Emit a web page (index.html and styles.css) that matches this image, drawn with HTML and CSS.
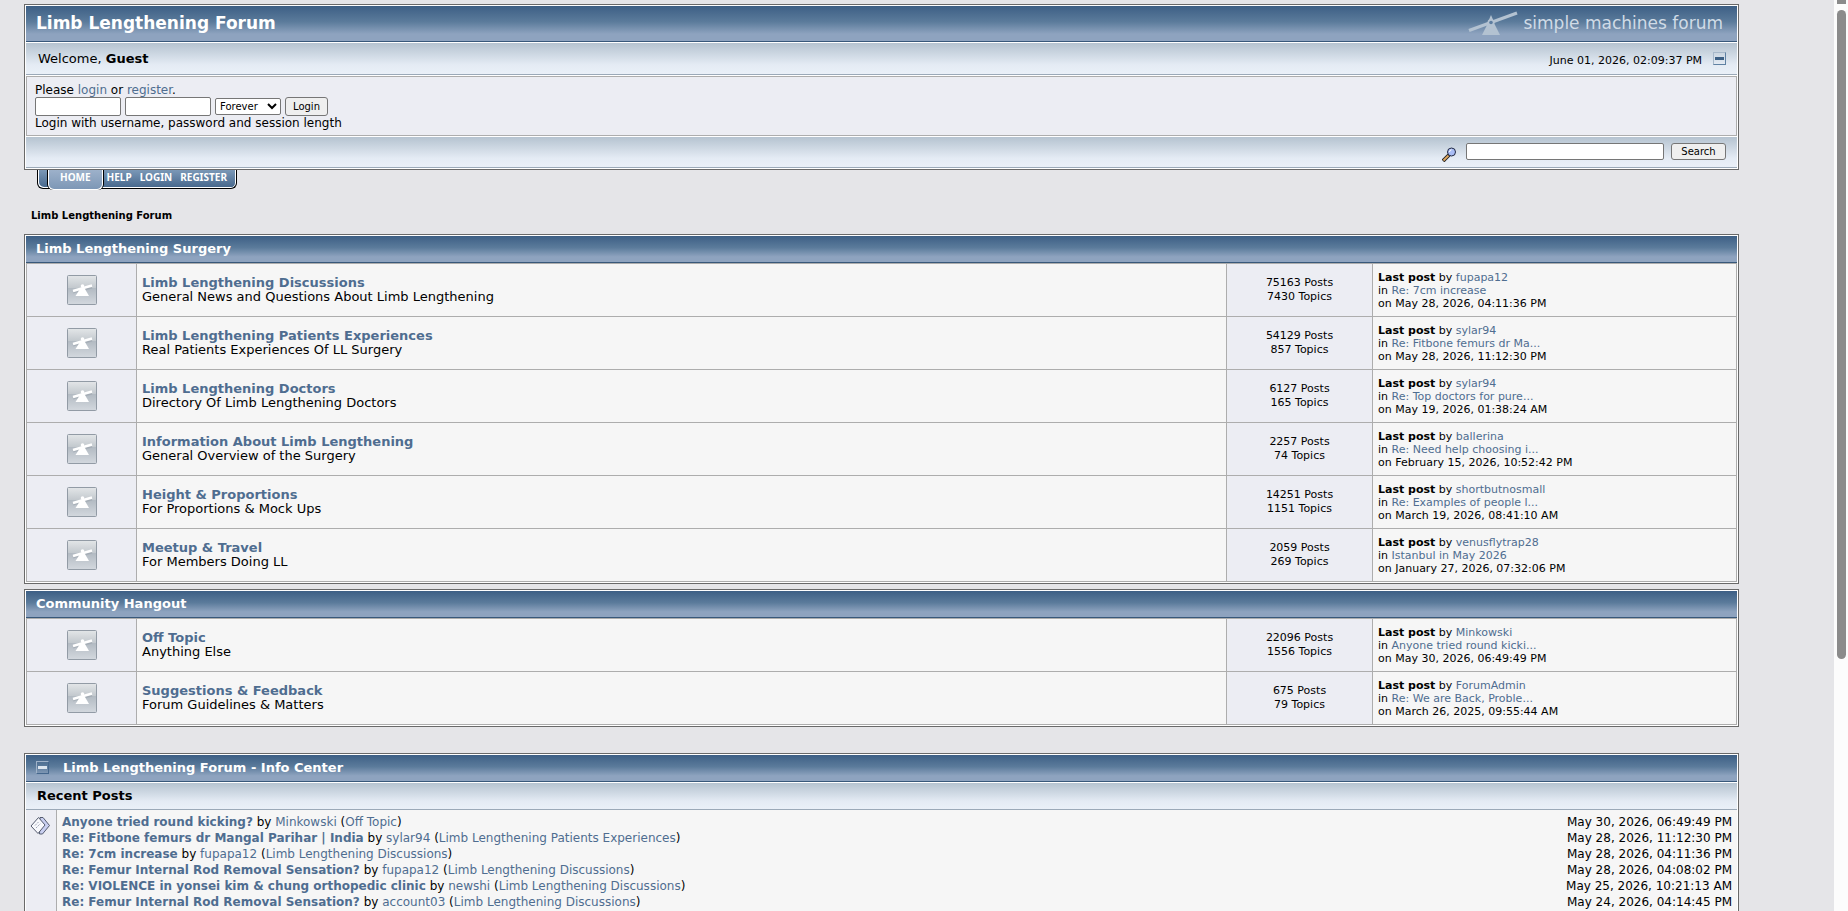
FILE: index.html
```
<!DOCTYPE html>
<html lang="en">
<head>
    <meta charset="UTF-8">
    <meta name="viewport" content="width=device-width, initial-scale=1.0">
    <title>Limb Lengthening Forum - Index</title>
    <link rel="stylesheet" href="styles.css">
</head>
<body>
    <svg width="0" height="0" class="sprite">
        <defs>
            <linearGradient id="boardTop" x1="0" y1="0" x2="0" y2="1">
                <stop offset="0" stop-color="#e3e6e8"/>
                <stop offset="0.42" stop-color="#c3c9ce"/>
                <stop offset="0.43" stop-color="#b2bac2"/>
                <stop offset="1" stop-color="#d3d8de"/>
            </linearGradient>
            <symbol id="board" viewBox="0 0 30 30">
                <rect x="0.5" y="0.5" width="29" height="29" rx="1" fill="url(#boardTop)" stroke="#929ba5"/>
                <path d="M6 17.500 25 12.500" stroke="#8f98a2" stroke-width="2" opacity="0.4"/>
                <path d="M8.500 21 13 14h5l4 7z" fill="#fff"/>
                <circle cx="15.500" cy="11" r="1.800" fill="#fff"/>
                <path d="M6 16 25 10.500" stroke="#fff" stroke-width="2.400"/>
            </symbol>
        </defs>
    </svg>

    <div class="page">
        <header class="frame">
            <div class="catbg top-bar">
                <h1>Limb Lengthening Forum</h1>
                <div class="smf-logo">
                    <svg width="50" height="26" viewBox="0 0 50 26">
                        <path d="M14 25 20.500 12h5L32 25z" fill="#b3c2d1"/>
                        <path d="M20 12l3-7 3 7z" fill="#b3c2d1"/>
                        <path d="M1 20.500 49 3" stroke="#b3c2d1" stroke-width="3.200"/>
                        <circle cx="23" cy="12.500" r="3.500" fill="#b3c2d1"/>
                        <circle cx="23" cy="12.500" r="1.800" fill="#5d7da0"/>
                    </svg>
                    <span>simple machines forum</span>
                </div>
            </div>
            <div class="titlebg user-bar">
                <span class="welcome">Welcome, <b>Guest</b></span>
                <span class="clock">June 01, 2026, 02:09:37 PM</span>
                <button class="collapse" aria-label="Shrink or expand the header"></button>
            </div>
            <form class="login">
                <div>Please <a href="#">login</a> or <a href="#">register</a>.</div>
                <div class="login-fields">
                    <input type="text" aria-label="Username">
                    <input type="password" aria-label="Password">
                    <select aria-label="Session length">
                        <option>Forever</option>
                        <option>1 Hour</option>
                        <option>1 Day</option>
                    </select>
                    <button type="button">Login</button>
                </div>
                <div>Login with username, password and session length</div>
            </form>
            <form class="titlebg search-bar">
                <svg width="15" height="15" viewBox="0 0 15 15">
                    <path d="M1 14 7 8" stroke="#222" stroke-width="3.800"/>
                    <path d="M1.500 13.500 6.500 8.500" stroke="#e0a860" stroke-width="1.800"/>
                    <circle cx="9.500" cy="5" r="4" fill="#a9bdf5" stroke="#222a44"/>
                    <path d="M7.500 5q0-2 2-2.200" stroke="#fff" fill="none"/>
                </svg>
                <input type="text" aria-label="Search">
                <button type="button">Search</button>
            </form>
        </header>

        <nav class="tabs">
            <a class="active" href="#">Home</a>
            <a href="#">Help</a>
            <a href="#">Login</a>
            <a href="#">Register</a>
        </nav>

        <div class="crumb"><a href="#">Limb Lengthening Forum</a></div>

        <section class="frame boards">
            <h2 class="catbg">Limb Lengthening Surgery</h2>
            <table>
                <tr>
                    <td class="icon"><svg><use href="#board"/></svg></td>
                    <td class="name"><a href="#">Limb Lengthening Discussions</a><br>General News and Questions About Limb Lengthening</td>
                    <td class="count">75163 Posts<br>7430 Topics</td>
                    <td class="last"><b>Last post</b> by <a href="#">fupapa12</a><br>in <a href="#">Re: 7cm increase</a><br>on May 28, 2026, 04:11:36 PM</td>
                </tr>
                <tr>
                    <td class="icon"><svg><use href="#board"/></svg></td>
                    <td class="name"><a href="#">Limb Lengthening Patients Experiences</a><br>Real Patients Experiences Of LL Surgery</td>
                    <td class="count">54129 Posts<br>857 Topics</td>
                    <td class="last"><b>Last post</b> by <a href="#">sylar94</a><br>in <a href="#">Re: Fitbone femurs dr Ma...</a><br>on May 28, 2026, 11:12:30 PM</td>
                </tr>
                <tr>
                    <td class="icon"><svg><use href="#board"/></svg></td>
                    <td class="name"><a href="#">Limb Lengthening Doctors</a><br>Directory Of Limb Lengthening Doctors</td>
                    <td class="count">6127 Posts<br>165 Topics</td>
                    <td class="last"><b>Last post</b> by <a href="#">sylar94</a><br>in <a href="#">Re: Top doctors for pure...</a><br>on May 19, 2026, 01:38:24 AM</td>
                </tr>
                <tr>
                    <td class="icon"><svg><use href="#board"/></svg></td>
                    <td class="name"><a href="#">Information About Limb Lengthening</a><br>General Overview of the Surgery</td>
                    <td class="count">2257 Posts<br>74 Topics</td>
                    <td class="last"><b>Last post</b> by <a href="#">ballerina</a><br>in <a href="#">Re: Need help choosing i...</a><br>on February 15, 2026, 10:52:42 PM</td>
                </tr>
                <tr>
                    <td class="icon"><svg><use href="#board"/></svg></td>
                    <td class="name"><a href="#">Height &amp; Proportions</a><br>For Proportions &amp; Mock Ups</td>
                    <td class="count">14251 Posts<br>1151 Topics</td>
                    <td class="last"><b>Last post</b> by <a href="#">shortbutnosmall</a><br>in <a href="#">Re: Examples of people l...</a><br>on March 19, 2026, 08:41:10 AM</td>
                </tr>
                <tr>
                    <td class="icon"><svg><use href="#board"/></svg></td>
                    <td class="name"><a href="#">Meetup &amp; Travel</a><br>For Members Doing LL</td>
                    <td class="count">2059 Posts<br>269 Topics</td>
                    <td class="last"><b>Last post</b> by <a href="#">venusflytrap28</a><br>in <a href="#">Istanbul in May 2026</a><br>on January 27, 2026, 07:32:06 PM</td>
                </tr>
            </table>
        </section>

        <section class="frame boards">
            <h2 class="catbg">Community Hangout</h2>
            <table>
                <tr>
                    <td class="icon"><svg><use href="#board"/></svg></td>
                    <td class="name"><a href="#">Off Topic</a><br>Anything Else</td>
                    <td class="count">22096 Posts<br>1556 Topics</td>
                    <td class="last"><b>Last post</b> by <a href="#">Minkowski</a><br>in <a href="#">Anyone tried round kicki...</a><br>on May 30, 2026, 06:49:49 PM</td>
                </tr>
                <tr>
                    <td class="icon"><svg><use href="#board"/></svg></td>
                    <td class="name"><a href="#">Suggestions &amp; Feedback</a><br>Forum Guidelines &amp; Matters</td>
                    <td class="count">675 Posts<br>79 Topics</td>
                    <td class="last"><b>Last post</b> by <a href="#">ForumAdmin</a><br>in <a href="#">Re: We are Back, Proble...</a><br>on March 26, 2025, 09:55:44 AM</td>
                </tr>
            </table>
        </section>

        <section class="frame info">
            <h2 class="catbg"><button class="collapse" aria-label="Shrink or expand the info center"></button>Limb Lengthening Forum - Info Center</h2>
            <h3 class="titlebg">Recent Posts</h3>
            <div class="recent">
                <div class="recent-icon">
                    <svg width="20" height="20" viewBox="0 0 20 20">
                        <path d="M10 1.500h3l6.500 8-7 8.500h-3z" fill="#c9cff0" stroke="#555c70"/>
                        <path d="M8.500 1.500 15 9l-7 8.500L1 10z" fill="#f8f9fd" stroke="#555c70"/>
                        <path d="M5 9.500l4-4M6 12l4.500-4.500" stroke="#a0a6b8" stroke-dasharray="2 1"/>
                    </svg>
                </div>
                <table>
                    <tr><td><b><a href="#">Anyone tried round kicking?</a></b> by <a href="#">Minkowski</a> (<a href="#">Off Topic</a>)</td><td class="date">May 30, 2026, 06:49:49 PM</td></tr>
                    <tr><td><b><a href="#">Re: Fitbone femurs dr Mangal Parihar | India</a></b> by <a href="#">sylar94</a> (<a href="#">Limb Lengthening Patients Experiences</a>)</td><td class="date">May 28, 2026, 11:12:30 PM</td></tr>
                    <tr><td><b><a href="#">Re: 7cm increase</a></b> by <a href="#">fupapa12</a> (<a href="#">Limb Lengthening Discussions</a>)</td><td class="date">May 28, 2026, 04:11:36 PM</td></tr>
                    <tr><td><b><a href="#">Re: Femur Internal Rod Removal Sensation?</a></b> by <a href="#">fupapa12</a> (<a href="#">Limb Lengthening Discussions</a>)</td><td class="date">May 28, 2026, 04:08:02 PM</td></tr>
                    <tr><td><b><a href="#">Re: VIOLENCE in yonsei kim &amp; chung orthopedic clinic</a></b> by <a href="#">newshi</a> (<a href="#">Limb Lengthening Discussions</a>)</td><td class="date">May 25, 2026, 10:21:13 AM</td></tr>
                    <tr><td><b><a href="#">Re: Femur Internal Rod Removal Sensation?</a></b> by <a href="#">account03</a> (<a href="#">Limb Lengthening Discussions</a>)</td><td class="date">May 24, 2026, 04:14:45 PM</td></tr>
                </table>
            </div>
        </section>
    </div>
    <div class="scrollbar"><span class="up"></span><span class="thumb"></span></div>
</body>
</html>
```
FILE: styles.css
```
* { box-sizing: border-box; }
html { height: 100%; overflow: hidden; }
body { margin: 0; height: 100%; overflow: hidden; background: #e5e5e8; color: #000; font-family: Verdana, "DejaVu Sans", sans-serif; font-size: 12px; line-height: 14px; }
a { color: #4f6d90; text-decoration: none; }
h1, h2, h3 { margin: 0; }
input, select, button { font-family: inherit; font-size: 11px; margin: 0; }
table { width: 100%; border-collapse: collapse; }
.sprite { position: absolute; }

.page { padding: 4px 109px 0 24px; }
.frame { border: 1px solid #696969; background: #fff; padding: 1px; }
.catbg { background: linear-gradient(#3d5f85, #5b7b9b 45%, #8ea3bf 80%, #8ea3bf); border-bottom: 1px solid #38587a; color: #fff; }
.titlebg { background: linear-gradient(#b5c3d0, #e4ebf4 70%, #eaf0f8); border-bottom: 1px solid #9ba9b8; }

/* header */
.top-bar { height: 36px; display: flex; align-items: center; justify-content: space-between; padding: 0 14px 2px 10px; }
.top-bar h1 { font-size: 17px; line-height: 20px; }
.smf-logo { display: flex; align-items: center; gap: 5px; color: #d0dbe6; font-size: 17px; line-height: 20px; }
.user-bar { height: 32px; margin-top: 1px; padding: 0 11px 0 12px; display: flex; align-items: center; }
.welcome { flex: 1; font-size: 13px; }
.clock { font-size: 11px; padding-top: 4px; margin-right: 11px; }
.collapse { width: 13px; height: 13px; padding: 0; border: 1px solid #5f81a3; border-top-color: #a7b8ca; border-left-color: #a7b8ca; background: linear-gradient(#3d6085, #3d6085) center / 9px 3px no-repeat; }
.login { margin: 1px 0; height: 60px; padding: 6px 8px; border: 1px solid #adadad; background: #ecedf3; }
.login-fields { display: flex; align-items: center; gap: 4px; height: 19px; }
.login-fields input { width: 86px; height: 19px; border: 1px solid #767676; border-radius: 2px; }
.login-fields select { width: 66px; height: 17px; border: 1px solid #767676; border-radius: 2px; background: #fff; font-size: 10px; }
.login-fields button, .search-bar button { height: 19px; border: 1px solid #767676; border-radius: 3px; background: #efefef; font-size: 10px; padding: 0 7px; }
.search-bar { height: 31px; display: flex; justify-content: flex-end; align-items: center; padding: 0 11px 2px 0; }
.search-bar svg { margin: 6px 9px 0 0; }
.search-bar input { width: 198px; height: 17px; border: 1px solid #767676; border-radius: 2px; margin-right: 7px; }
.search-bar button { width: 55px; height: 17px; }

.tabs { display: flex; width: fit-content; height: 19px; margin-left: 13px; padding-left: 10px; padding-right: 5px; border: 1px solid #000; border-top: 0; border-radius: 0 0 6px 6px; background: linear-gradient(#7b98b7, #45668b); box-shadow: inset 1px -1px #fff, inset -1px 0 #fff; }
.tabs a { padding: 0 4px; color: #fff; font-family: Tahoma, "Noto Sans", sans-serif; font-size: 10px; font-weight: bold; text-transform: uppercase; }
.tabs .active { height: 20px; padding: 0 11px; border: 1px solid #fff; border-top: 0; border-radius: 0 0 6px 6px; background: linear-gradient(#9db1ca, #7d97b6); box-shadow: 1px 0 #000, -1px 0 #000; }
.crumb { margin: 20px 0 11px 7px; font-size: 10px; font-weight: bold; }
.crumb a { color: #000; }

/* boards */
h2.catbg { height: 27px; padding: 0 10px 1px; font-size: 13px; line-height: 25px; display: flex; align-items: center; }
.boards { margin-bottom: 5px; }
.boards table { table-layout: fixed; }
.boards td { height: 53px; padding: 0 5px; border: 1px solid #adadad; background: #f6f6f6; }
.boards .icon { width: 110px; background: #ecedf3; text-align: center; }
.icon svg { width: 30px; height: 30px; display: block; margin: 0 auto; }
.boards .name { padding-bottom: 1px; font-size: 13px; }
.name a { font-weight: bold; }
.boards .count { width: 146px; background: #ecedf3; text-align: center; font-size: 11px; }
.boards .last { width: 364px; padding-top: 1px; font-size: 11px; line-height: 13px; }

/* info center */
.info { margin-top: 26px; }
.info .collapse { margin-right: 14px; background-image: linear-gradient(#dce5ee, #dce5ee); border-color: #9fb2c8 #45678d #45678d #9fb2c8; }
.info h3 { height: 27px; margin-top: 1px; padding: 0 11px; font-size: 13px; line-height: 25px; }
.recent { display: flex; background: #f6f6f6; }
.recent-icon { width: 31px; padding: 6px 0 0 4px; border-right: 1px solid #adadad; background: #ecedf3; }
.recent table { flex: 1; margin: 4px 5px; }
.recent td { height: 16px; padding: 0; }
.recent .date { text-align: right; }

.scrollbar { position: fixed; top: 0; right: 0; bottom: 0; width: 14px; background: #fcfcfc; }
.scrollbar span { display: block; width: 9px; margin-left: 3px; background: #8b8b8b; }
.up { height: 4px; }
.thumb { height: 649px; margin-top: 6px; border-radius: 5px; }
```
